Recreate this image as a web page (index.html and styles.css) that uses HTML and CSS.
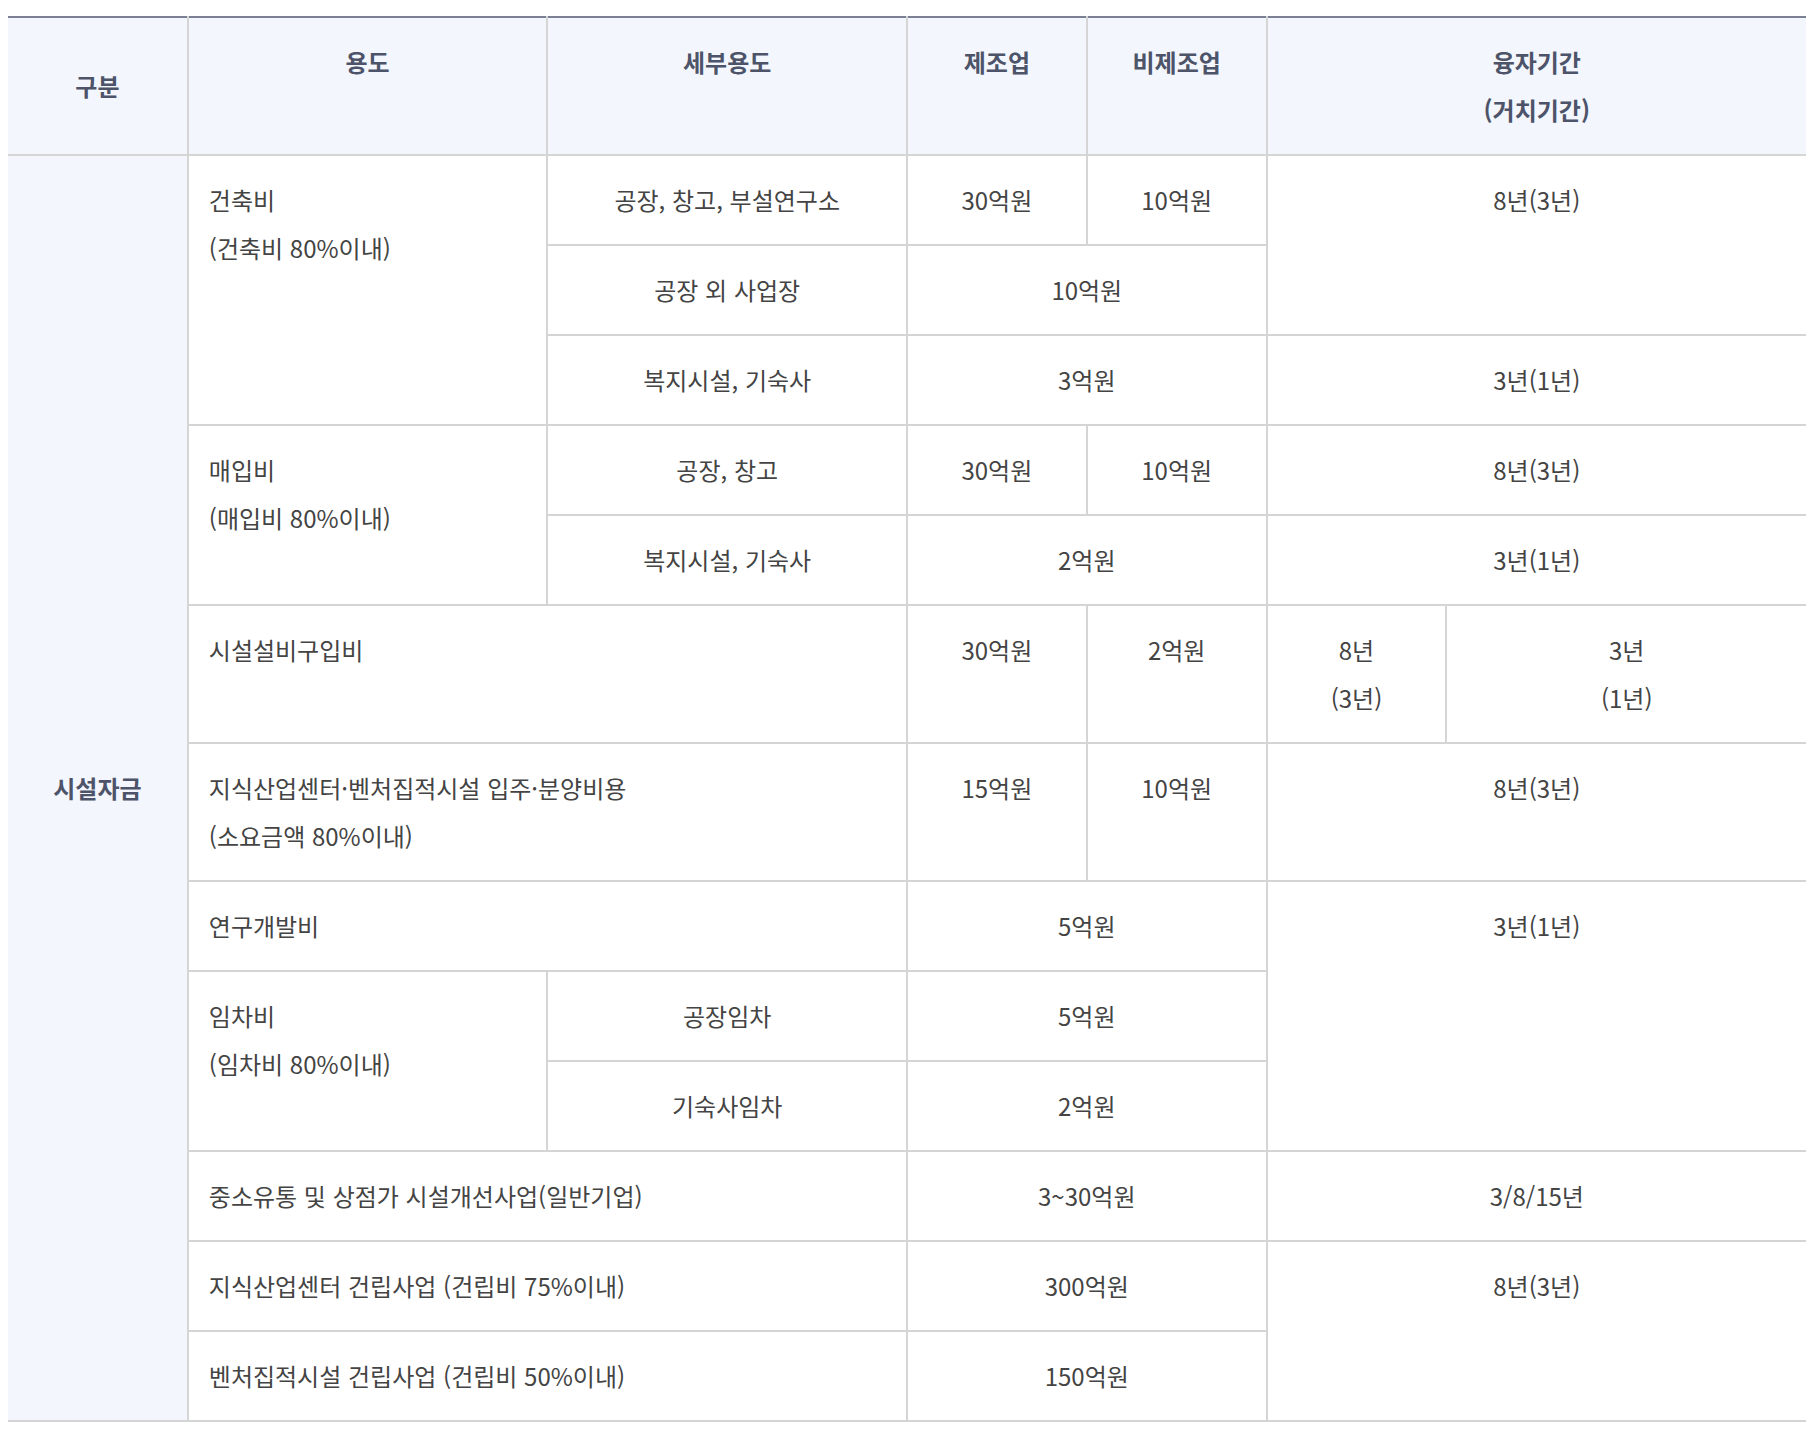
FILE: index.html
```html
<!DOCTYPE html>
<html lang="ko">
<head>
<meta charset="utf-8">
<title>시설자금 융자 한도</title>
<link rel="stylesheet" href="styles.css">
</head>
<body>
<table class="loan">
  <colgroup>
    <col class="w1"><col class="w2"><col class="w2"><col class="w1"><col class="w1"><col class="w1"><col class="w2">
  </colgroup>
  <thead>
    <tr>
      <th class="mid">구분</th>
      <th>용도</th>
      <th>세부용도</th>
      <th>제조업</th>
      <th>비제조업</th>
      <th colspan="2">융자기간<br>(거치기간)</th>
    </tr>
  </thead>
  <tbody>
    <tr>
      <th class="mid side" rowspan="13">시설자금</th>
      <td class="left" rowspan="3">건축비<br>(건축비 80%이내)</td>
      <td>공장, 창고, 부설연구소</td>
      <td>30억원</td>
      <td>10억원</td>
      <td colspan="2" rowspan="2">8년(3년)</td>
    </tr>
    <tr>
      <td>공장 외 사업장</td>
      <td colspan="2">10억원</td>
    </tr>
    <tr>
      <td>복지시설, 기숙사</td>
      <td colspan="2">3억원</td>
      <td colspan="2">3년(1년)</td>
    </tr>
    <tr>
      <td class="left" rowspan="2">매입비<br>(매입비 80%이내)</td>
      <td>공장, 창고</td>
      <td>30억원</td>
      <td>10억원</td>
      <td colspan="2">8년(3년)</td>
    </tr>
    <tr>
      <td>복지시설, 기숙사</td>
      <td colspan="2">2억원</td>
      <td colspan="2">3년(1년)</td>
    </tr>
    <tr>
      <td class="left" colspan="2">시설설비구입비</td>
      <td>30억원</td>
      <td>2억원</td>
      <td>8년<br>(3년)</td>
      <td>3년<br>(1년)</td>
    </tr>
    <tr>
      <td class="left" colspan="2">지식산업센터·벤처집적시설 입주·분양비용<br>(소요금액 80%이내)</td>
      <td>15억원</td>
      <td>10억원</td>
      <td colspan="2">8년(3년)</td>
    </tr>
    <tr>
      <td class="left" colspan="2">연구개발비</td>
      <td colspan="2">5억원</td>
      <td colspan="2" rowspan="3">3년(1년)</td>
    </tr>
    <tr>
      <td class="left" rowspan="2">임차비<br>(임차비 80%이내)</td>
      <td>공장임차</td>
      <td colspan="2">5억원</td>
    </tr>
    <tr>
      <td>기숙사임차</td>
      <td colspan="2">2억원</td>
    </tr>
    <tr>
      <td class="left" colspan="2">중소유통 및 상점가 시설개선사업(일반기업)</td>
      <td colspan="2">3~30억원</td>
      <td colspan="2">3/8/15년</td>
    </tr>
    <tr>
      <td class="left" colspan="2">지식산업센터 건립사업 (건립비 75%이내)</td>
      <td colspan="2">300억원</td>
      <td colspan="2" rowspan="2">8년(3년)</td>
    </tr>
    <tr>
      <td class="left" colspan="2">벤처집적시설 건립사업 (건립비 50%이내)</td>
      <td colspan="2">150억원</td>
    </tr>
  </tbody>
</table>
</body>
</html>
```
FILE: styles.css
```css
html, body {
  background: #ffffff;
}
body {
  margin: 8px;
  font-family: "Noto Sans CJK KR", "Noto Sans", sans-serif;
  font-size: 24px;
  color: #444444;
}
.loan {
  width: 100%;
  margin-top: 8px;
  border-collapse: collapse;
  table-layout: fixed;
  border-top: 2px solid #7b8094;
  border-bottom: 2px solid #d5d5d5;
}
.w1 { width: 10%; }
.w2 { width: 20%; }
.loan th,
.loan td {
  padding: 20px 20px;
  line-height: 48px;
  text-align: center;
  vertical-align: top;
  border: 2px solid #d5d5d5;
  font-weight: 400;
}
.loan tr > :first-child { border-left: none; }
.loan tr > :last-child { border-right: none; }
.loan thead th {
  background: #f3f6fd;
  color: #4d5469;
  font-weight: 700;
  border-top: none;
}
.loan th.side {
  background: #f3f6fd;
  color: #4d5469;
  font-weight: 700;
  border-left: none;
}
.loan .mid { vertical-align: middle; }
.loan td.left { text-align: left; }
```
